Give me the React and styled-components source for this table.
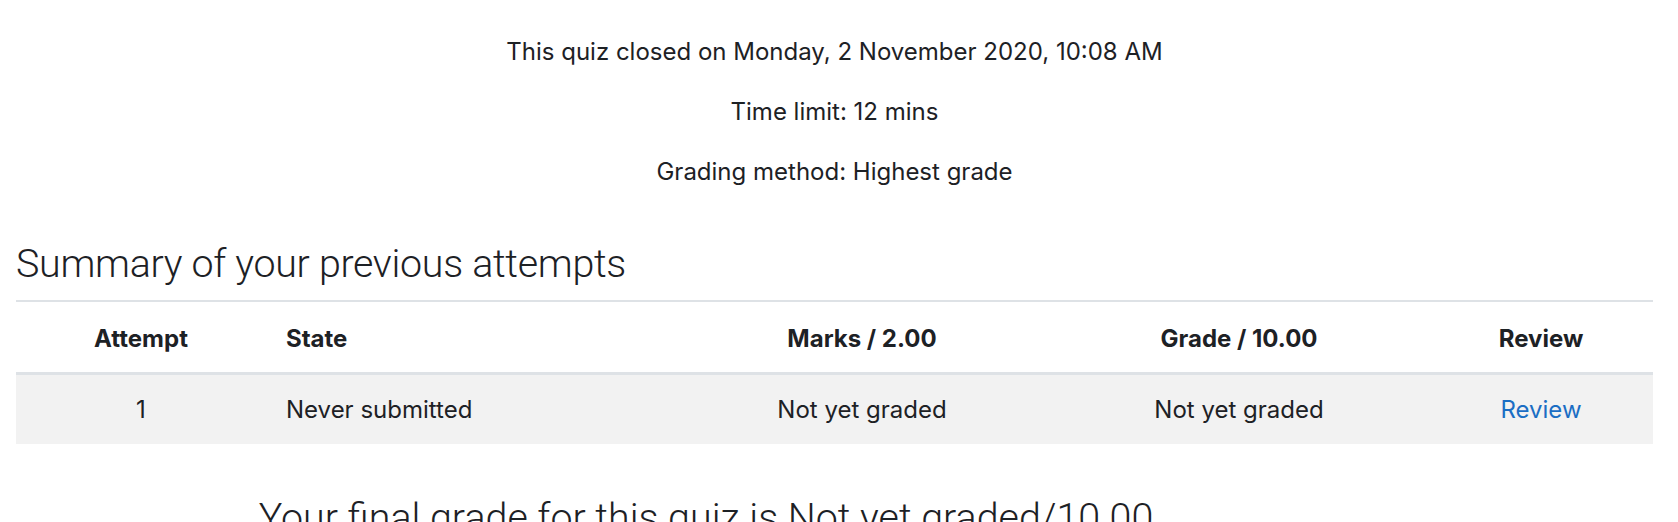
import React from "react";
import styled, { createGlobalStyle } from "styled-components";

const GlobalStyle = createGlobalStyle`
  html, body {
    margin: 0;
    padding: 0;
    background: #ffffff;
  }
  body {
    font-family: Inter, "Noto Sans", "Liberation Sans", sans-serif;
    color: #1d2125;
    overflow: hidden;
  }
`;

const Page = styled.main`
  box-sizing: border-box;
  width: 1678px;
  height: 522px;
  padding: 34px 25px 0 16px;
  overflow: hidden;
`;

const Info = styled.div`
  text-align: center;
`;

const InfoLine = styled.p`
  margin: 0 0 24px;
  font-size: 24px;
  line-height: 36px;
  font-weight: 400;
`;

const Heading = styled.h3`
  margin: 50px 0 13px;
  font-family: Roboto, Inter, "Liberation Sans", sans-serif;
  font-size: 39.4px;
  line-height: 47px;
  font-weight: 300;
  letter-spacing: -0.3px;
`;

const Table = styled.table`
  width: 100%;
  border-collapse: collapse;
  table-layout: fixed;
  font-size: 24px;
  line-height: 36px;
`;

const HeadCell = styled.th`
  padding: 19px 20px 15px;
  border-top: 2px solid #dee2e6;
  border-bottom: 3px solid #dee2e6;
  font-weight: 700;
  text-align: ${(p) => p.$align || "center"};
  white-space: nowrap;
`;

const Row = styled.tr`
  background: #f2f2f2;
`;

const Cell = styled.td`
  padding: 17px 20px 16px;
  text-align: ${(p) => p.$align || "center"};
  white-space: nowrap;
`;

const ReviewLink = styled.a`
  color: #1b6ec4;
  text-decoration: none;
`;

const Feedback = styled.h3`
  margin: 50px 0 0;
  padding-right: 257px;
  text-align: center;
  font-family: Roboto, Inter, "Liberation Sans", sans-serif;
  font-size: 39.4px;
  line-height: 47px;
  font-weight: 300;
  white-space: nowrap;
`;

const columns = [
  { label: "Attempt", width: 250 },
  { label: "State", width: 409, align: "left" },
  { label: "Marks / 2.00", width: 374 },
  { label: "Grade / 10.00", width: 380 },
  { label: "Review", width: 224 },
];

export default function App() {
  return (
    <>
      <GlobalStyle />
      <Page>
        <Info>
          <InfoLine>This quiz closed on Monday, 2 November 2020, 10:08 AM</InfoLine>
          <InfoLine>Time limit: 12 mins</InfoLine>
          <InfoLine>Grading method: Highest grade</InfoLine>
        </Info>
        <Heading>Summary of your previous attempts</Heading>
        <Table>
          <colgroup>
            {columns.map((c) => (
              <col key={c.label} style={{ width: c.width }} />
            ))}
          </colgroup>
          <thead>
            <tr>
              {columns.map((c) => (
                <HeadCell key={c.label} $align={c.align}>
                  {c.label}
                </HeadCell>
              ))}
            </tr>
          </thead>
          <tbody>
            <Row>
              <Cell>1</Cell>
              <Cell $align="left">Never submitted</Cell>
              <Cell>Not yet graded</Cell>
              <Cell>Not yet graded</Cell>
              <Cell>
                <ReviewLink href="#review">Review</ReviewLink>
              </Cell>
            </Row>
          </tbody>
        </Table>
        <Feedback>Your final grade for this quiz is Not yet graded/10.00</Feedback>
      </Page>
    </>
  );
}
